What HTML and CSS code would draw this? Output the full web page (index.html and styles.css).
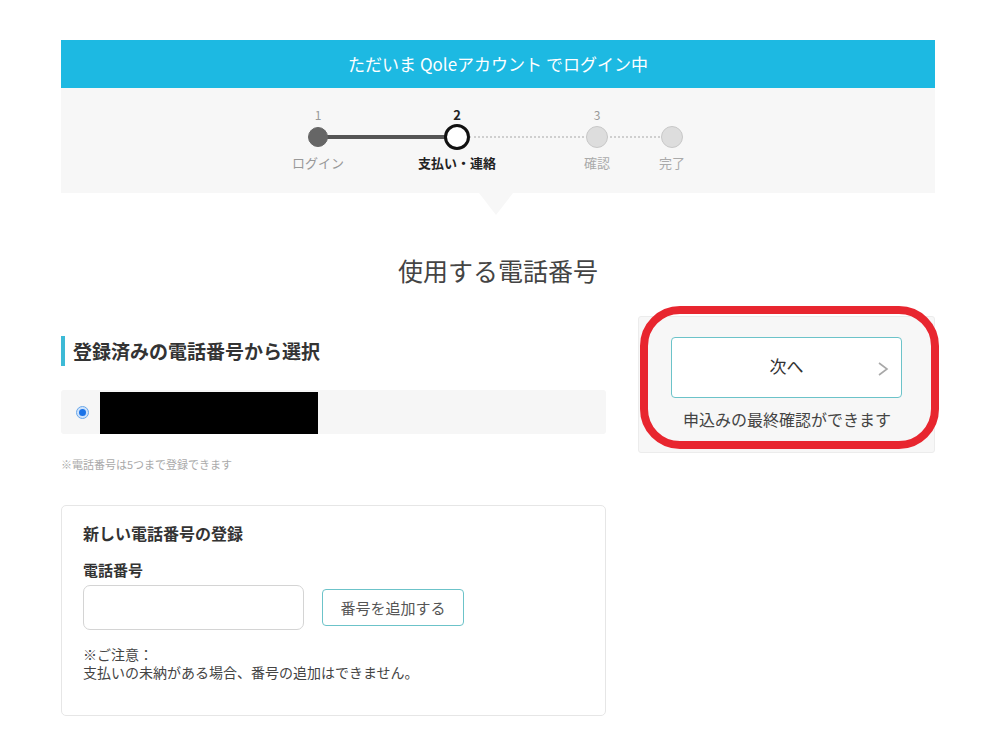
FILE: index.html
```html
<!DOCTYPE html>
<html lang="ja">
<head>
<meta charset="utf-8">
<link rel="stylesheet" href="styles.css">
</head>
<body>
<div class="page">
  <div class="loginbar">ただいま Qoleアカウント でログイン中</div>
  <div class="stepper">
    <div class="steps">
      <div class="line line-done"></div>
      <div class="line line-todo"></div>
      <div class="step s1 done"><span class="num">1</span><span class="dot"></span><span class="lbl">ログイン</span></div>
      <div class="step s2 current"><span class="num">2</span><span class="dot"></span><span class="lbl">支払い・連絡</span></div>
      <div class="step s3 todo"><span class="num">3</span><span class="dot"></span><span class="lbl">確認</span></div>
      <div class="step s4 todo"><span class="num">&nbsp;</span><span class="dot"></span><span class="lbl">完了</span></div>
    </div>
    <div class="pointer"></div>
  </div>
  <h1 class="title">使用する電話番号</h1>
  <div class="columns">
    <div class="left">
      <h2 class="sec-head">登録済みの電話番号から選択</h2>
      <div class="radio-row">
        <span class="radio"><span class="radio-in"></span></span>
        <span class="masked"></span>
      </div>
      <p class="small-note">※電話番号は5つまで登録できます</p>
      <div class="card">
        <h3 class="card-head">新しい電話番号の登録</h3>
        <div class="field-label">電話番号</div>
        <div class="field-row">
          <div class="input"></div>
          <div class="add-btn">番号を追加する</div>
        </div>
        <p class="caution">※ご注意：<br>支払いの未納がある場合、番号の追加はできません。</p>
      </div>
    </div>
    <div class="right">
      <div class="next-box">
        <div class="next-btn"><span>次へ</span>
          <svg class="chev" width="12" height="16" viewBox="0 0 12 16"><polyline points="2,2 10,8 2,14" fill="none" stroke="#a8a8a8" stroke-width="1.6"/></svg>
        </div>
        <p class="next-note">申込みの最終確認ができます</p>
      </div>
      <div class="highlight"></div>
    </div>
  </div>
</div>
</body>
</html>
```
FILE: styles.css
```css
* { box-sizing: border-box; }
html, body { margin: 0; padding: 0; background: #fff; }
body {
  font-family: "Noto Sans CJK JP", "Noto Sans", sans-serif;
  color: #333;
}
.page {
  width: 874px;
  margin-left: 61px;
  padding-top: 40px;
}
.loginbar {
  height: 48px;
  background: #1db9e2;
  color: #fff;
  font-size: 17px;
  line-height: 48px;
  text-align: center;
}
.stepper {
  position: relative;
  height: 105px;
  background: #f7f7f7;
}
.steps {
  position: relative;
  height: 105px;
}
.step {
  position: absolute;
  top: 19px;
  width: 120px;
  margin-left: -60px;
  display: flex;
  flex-direction: column;
  align-items: center;
}
.s1 { left: 257px; }
.s2 { left: 396px; }
.s3 { left: 536px; }
.s4 { left: 611px; }
.num {
  font-size: 12px;
  line-height: 16px;
  color: #999;
  height: 16px;
}
.current .num { color: #222; font-weight: bold; font-size: 13px; }
.dot {
  margin-top: 3px;
  width: 22px;
  height: 22px;
  border-radius: 50%;
  background: #ddd;
  border: 1px solid #c8c8c8;
}
.done .dot { background: #666; border-color: #666; width: 20px; height: 20px; margin-top: 4px; }
.current .dot { background: #fff; border: 3px solid #111; width: 26px; height: 26px; margin-top: 1px; }
.lbl {
  margin-top: 6px;
  font-size: 13px;
  color: #aaa;
  line-height: 18px;
}
.done .lbl { color: #999; margin-top: 7px; }
.current .lbl { color: #222; font-weight: bold; margin-top: 4px; }
.line {
  position: absolute;
}
.line-done {
  top: 47px;
  left: 257px;
  width: 139px;
  height: 4px;
  background: #555;
}
.line-todo {
  left: 408px;
  width: 203px;
  height: 0;
  top: 48px;
  border-top: 2px dotted #cfcfcf;
}
.pointer {
  position: absolute;
  left: 418px;
  bottom: -22px;
  width: 0;
  height: 0;
  border-left: 17px solid transparent;
  border-right: 17px solid transparent;
  border-top: 22px solid #f7f7f7;
}
.title {
  margin: 57px 0 0;
  text-align: center;
  font-size: 25px;
  font-weight: normal;
  color: #444;
  line-height: 40px;
}
.columns {
  display: flex;
  gap: 32px;
  margin-top: 26px;
}
.left { width: 545px; }
.right { width: 297px; position: relative; }
.sec-head {
  margin: 20px 0 0;
  border-left: 4px solid #3dbad6;
  padding-left: 8px;
  font-size: 19px;
  font-weight: bold;
  line-height: 30px;
  color: #333;
}
.radio-row {
  margin-top: 24px;
  height: 44px;
  background: #f6f6f6;
  border-radius: 3px;
  display: flex;
  align-items: center;
  padding-left: 15px;
}
.radio {
  width: 13px;
  height: 13px;
  border-radius: 50%;
  border: 1px solid #6aa8ea;
  background: #cfe3fb;
  display: flex;
  align-items: center;
  justify-content: center;
}
.radio-in {
  width: 7px;
  height: 7px;
  border-radius: 50%;
  background: #1a73e8;
}
.masked {
  margin-left: 11px;
  width: 218px;
  height: 42px;
  background: #000;
  align-self: flex-end;
}
.small-note {
  margin: 22px 0 0;
  font-size: 11px;
  color: #aaa;
  line-height: 16px;
}
.card {
  margin-top: 33px;
  border: 1px solid #e6e6e6;
  border-radius: 5px;
  padding: 16px 21px 34px;
}
.card-head {
  margin: 0;
  font-size: 16px;
  font-weight: bold;
  line-height: 22px;
  color: #333;
}
.field-label {
  margin-top: 15px;
  font-size: 15px;
  font-weight: bold;
  line-height: 22px;
  color: #333;
}
.field-row {
  display: flex;
  align-items: center;
  gap: 18px;
  margin-top: 4px;
}
.input {
  width: 221px;
  height: 45px;
  border: 1px solid #d4d4d4;
  border-radius: 7px;
  background: #fff;
}
.add-btn {
  width: 142px;
  height: 37px;
  border: 1px solid #6cc3c9;
  border-radius: 4px;
  font-size: 15px;
  line-height: 35px;
  text-align: center;
  color: #555;
}
.caution {
  margin: 15px 0 0;
  font-size: 14px;
  line-height: 18px;
  color: #444;
}
.next-box {
  background: #f7f7f7;
  border: 1px solid #ececec;
  border-radius: 3px;
  padding: 20px 32px 18px;
  height: 137px;
}
.next-btn {
  position: relative;
  height: 61px;
  background: #fff;
  border: 1px solid #6cc3c9;
  border-radius: 4px;
  display: flex;
  align-items: center;
  justify-content: center;
  font-size: 17px;
  color: #333;
  padding-bottom: 4px;
}
.chev {
  position: absolute;
  right: 12px;
  top: 23px;
}
.next-note {
  margin: 9px 0 0 -25px;
  font-size: 16px;
  line-height: 24px;
  color: #444;
  white-space: nowrap;
  width: 282px;
  text-align: center;
}
.highlight {
  position: absolute;
  left: 2px;
  top: -10px;
  width: 299px;
  height: 143px;
  border: 8px solid #e8262f;
  border-radius: 40px;
  pointer-events: none;
}
```
